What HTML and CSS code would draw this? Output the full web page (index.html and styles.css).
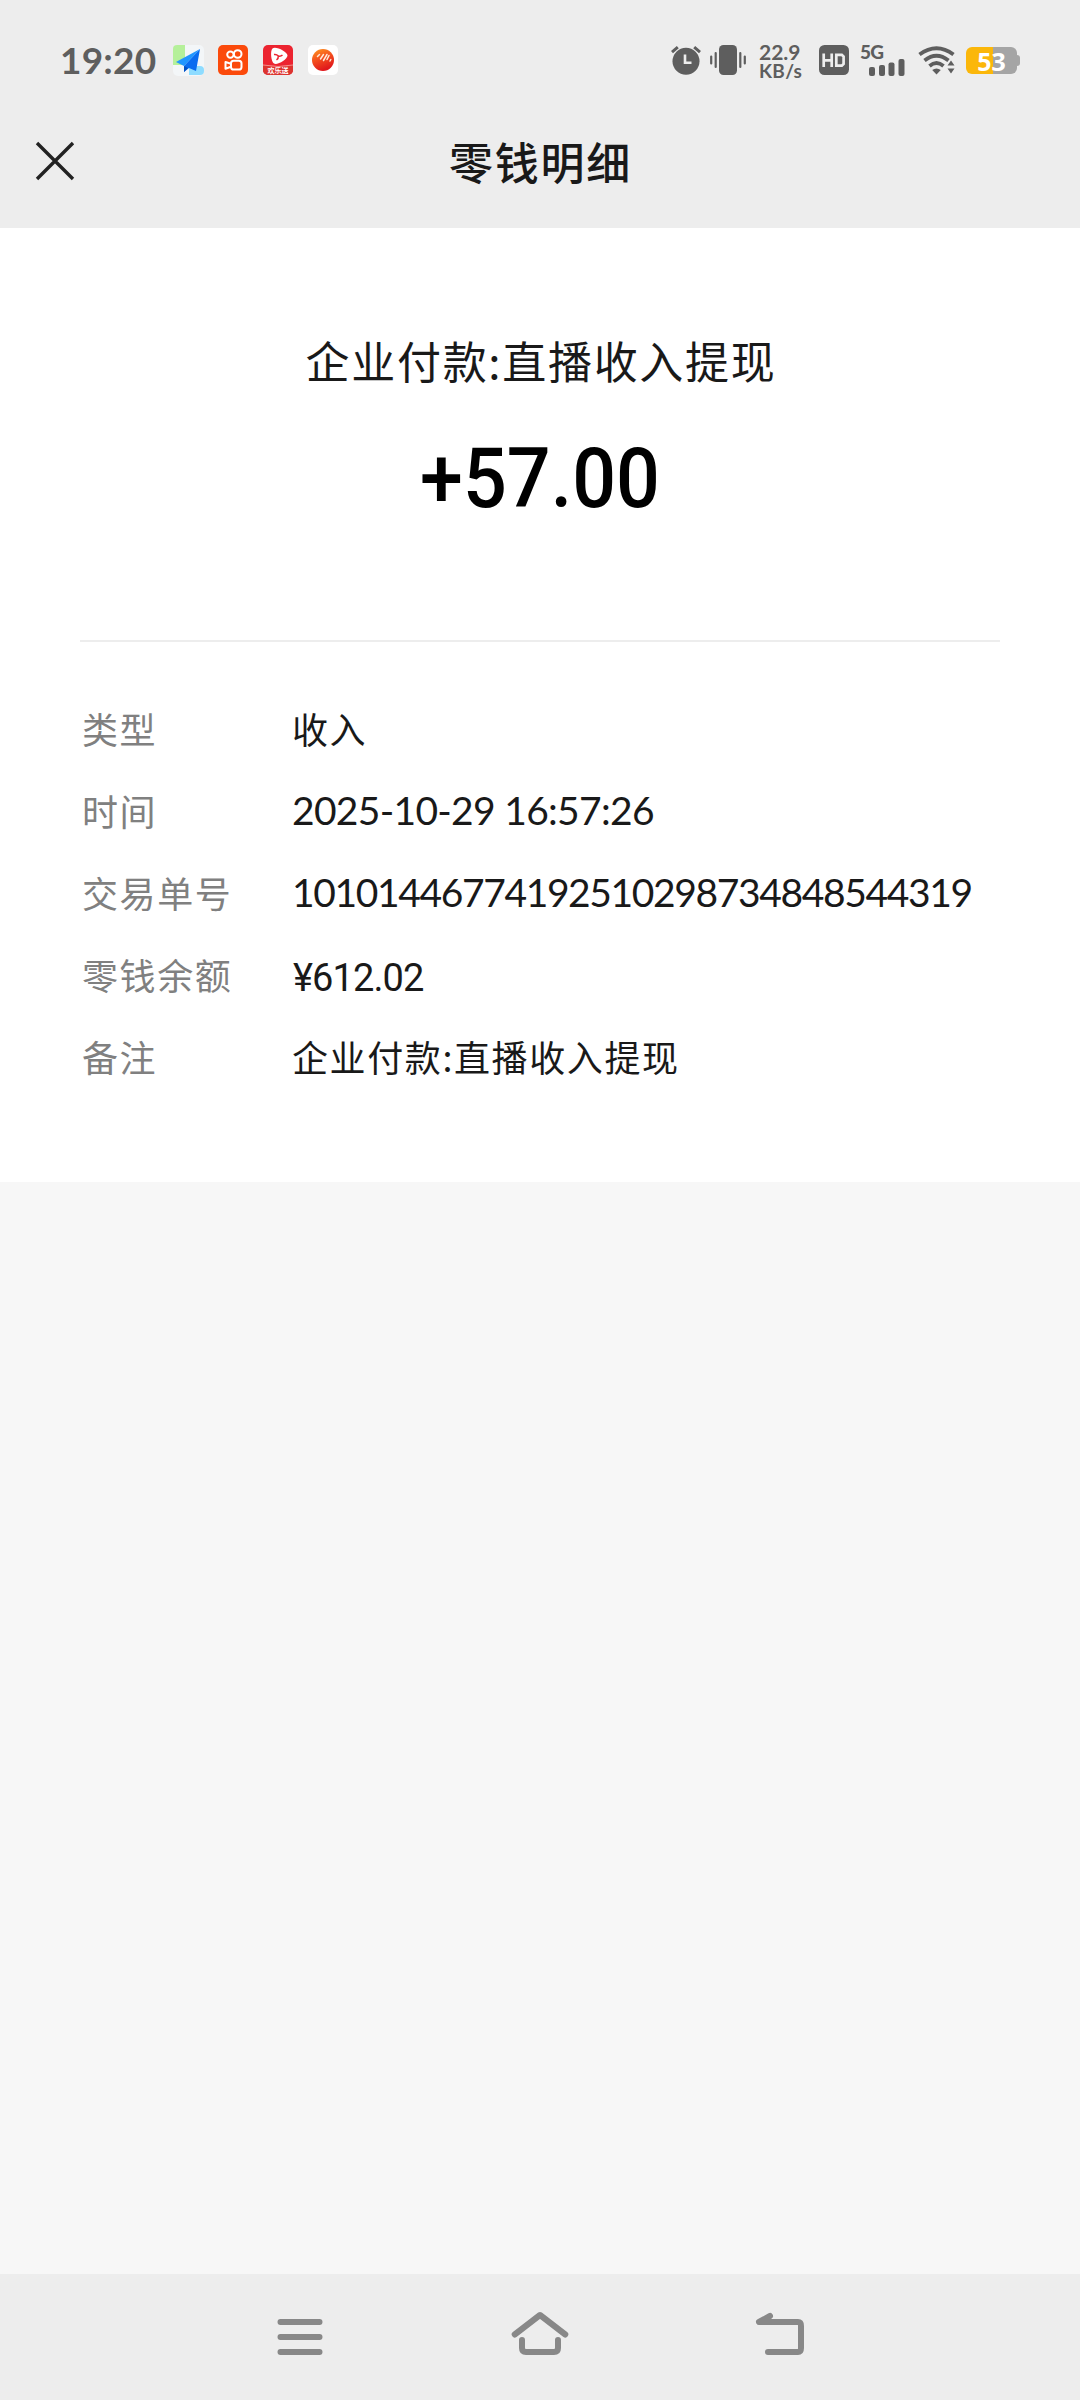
FILE: index.html
```html
<!DOCTYPE html>
<html lang="zh-CN">
<head>
<meta charset="utf-8">
<title>零钱明细</title>
<link rel="stylesheet" href="styles.css">
</head>
<body>
<div class="screen">
  <div class="status">
    <span class="clock">19:20</span>
    <svg class="app app-plane" viewBox="0 0 31 31" width="31" height="31">
      <rect x="0" y="0" width="31" height="31" rx="5" fill="#f3f6f8"/>
      <path d="M4 0h8v20H0V4a4 4 0 0 1 4-4z" fill="#b5f09a"/>
      <path d="M16 21h11a4 4 0 0 1 4 4v1a4 4 0 0 1-4 4H16z" fill="#8edcff"/>
      <path d="M27 4 3 17l8 4z" fill="#2196ff"/>
      <path d="M27 4 11 21v6l5-4 7 3z" fill="#0a6cf0"/>
      <path d="M11 21l4 2-4 4z" fill="#0550c0"/>
    </svg>
    <svg class="app" viewBox="0 0 30 30" width="30" height="30">
      <rect width="30" height="30" rx="5" fill="#fb4a0b"/>
      <g fill="none" stroke="#fff" stroke-width="2">
        <circle cx="12.4" cy="9.600" r="3.200"/><circle cx="19.700" cy="9" r="3.800"/>
        <rect x="13" y="15.700" width="10.500" height="8.800" rx="2.600"/>
        <path d="M13 18.800 7.500 17v6.800l5.500-2" stroke-linejoin="round"/>
      </g>
    </svg>
    <svg class="app" viewBox="0 0 30 30" width="30" height="30">
      <rect width="30" height="30" rx="5" fill="#ec2430"/>
      <path d="M0 20q15 3 30 0v5a5 5 0 0 1-5 5H5a5 5 0 0 1-5-5z" fill="#dc342f"/>
      <path d="M0 20q15 3 30 0" fill="none" stroke="#f7a9a5" stroke-width=".8"/>
      <path d="M9.500 3.500C12 .5 24.500 6.500 24.500 10.500S14 20.500 11 18.500 7 6 9.500 3.500z" fill="#fff"/>
      <path d="M11 9.500q2.500-.5 4.300 1.500 2.200.8 4.200-1M15.300 11q.3 2.500-1.800 4" fill="none" stroke="#ec2430" stroke-width="1.500"/>
      <text class="app-label" x="15" y="28.200" text-anchor="middle">欢乐送</text>
    </svg>
    <svg class="app" viewBox="0 0 30 30" width="30" height="30">
      <defs><linearGradient id="ball" x1="0" y1="0" x2=".4" y2="1"><stop offset="0" stop-color="#ff9a1f"/><stop offset=".5" stop-color="#f4501e"/><stop offset="1" stop-color="#e0181c"/></linearGradient></defs>
      <rect width="30" height="30" rx="5" fill="#fff"/>
      <circle cx="15" cy="15" r="11" fill="url(#ball)"/>
      <path d="M9.500 11.500l2-2M12.500 14l3-4.500M15.500 15.500l3.500-6M19 14.500l2-4M22 16l.8-1.500" stroke="#ffe9d8" stroke-width="1.500" stroke-linecap="round"/>
    </svg>
    <svg class="alarm" viewBox="0 0 30 30" width="30" height="30" fill="#5e5e5e">
      <circle cx="15" cy="16.200" r="13.500"/>
      <path d="M1 7.200 6.800 2.200M29 7.200l-5.800-5" stroke="#5e5e5e" stroke-width="3"/>
      <path d="M14 9.500v8.300h6.500" fill="none" stroke="#ededed" stroke-width="2.600"/>
    </svg>
    <svg class="vibrate" viewBox="0 0 36 30" width="36" height="30" fill="#5e5e5e">
      <rect x="9" width="18" height="30" rx="4.500"/>
      <path d="M5.700 8v14M1.200 11.500v7M30.300 8v14M34.800 11.500v7" stroke="#5e5e5e" stroke-width="2.200" stroke-linecap="round"/>
    </svg>
    <div class="speed"><span class="rate">22.9</span><span class="unit">KB/s</span></div>
    <svg class="hd" viewBox="0 0 30 30" width="30" height="30">
      <rect width="30" height="30" rx="5.500" fill="#5e5e5e"/>
      <path d="M4.700 8.500v13.500M12.700 8.500v13.500M4.700 15.300h8M17.300 9.800h5.500l1.800 1.800v7.300l-1.800 1.800h-5.500z" fill="none" stroke="#ededed" stroke-width="2.700"/>
    </svg>
    <div class="signal">
      <span class="gen">5G</span>
      <svg class="bars" viewBox="0 0 36 17" width="36" height="17" fill="#5e5e5e">
        <rect x="0" y="8" width="6" height="9" rx="2"/><rect x="10" y="6" width="6" height="11" rx="2"/><rect x="19.500" y="3.500" width="6" height="13.500" rx="2"/><rect x="29.500" y="0" width="6" height="17" rx="2"/>
      </svg>
    </div>
    <svg class="wifi" viewBox="0 0 37 30" width="37" height="30">
      <g fill="none" stroke="#5e5e5e" stroke-width="3.800">
        <path d="M1.500 9.500Q18.500-3 35.500 9.500"/><path d="M6.500 15.500Q18.500 6 30.500 15.500"/><path d="M11.500 21Q18.500 15 25.500 21"/>
      </g>
      <path d="M14.200 25q4.300-3 8.600 0l-4.300 4.500zM29.500 20.500l3.500-5 3.500 5zM29.500 23.500h7l-3.500 5z" fill="#5e5e5e"/>
    </svg>
    <div class="battery"><span class="level">53</span></div>
  </div>

  <div class="titlebar">
    <svg class="close" viewBox="0 0 40 40" width="40" height="40"><path d="M2 2l36 36M38 2 2 38" stroke="#222" stroke-width="3.400"/></svg>
    <h1 class="title">零钱明细</h1>
  </div>

  <main class="card">
    <div class="summary">
      <div class="name">企业付款:直播收入提现</div>
      <div class="amount">+57.00</div>
    </div>
    <dl class="details">
      <div class="row"><dt>类型</dt><dd>收入</dd></div>
      <div class="row"><dt>时间</dt><dd class="date">2025-10-29 16:57:26</dd></div>
      <div class="row"><dt>交易单号</dt><dd class="serial">10101446774192510298734848544319</dd></div>
      <div class="row"><dt>零钱余额</dt><dd class="balance">¥612.02</dd></div>
      <div class="row"><dt>备注</dt><dd>企业付款:直播收入提现</dd></div>
    </dl>
  </main>

  <nav class="navbar">
    <svg viewBox="0 0 60 60" width="60" height="60"><path d="M10.500 18h39M10.500 33h39M10.500 48h39"/></svg>
    <svg viewBox="0 0 60 60" width="60" height="60"><path d="M4.700 30.500 30 11l25.300 19.500M12 36v8q0 4 4 4h28q4 0 4-4v-8"/></svg>
    <svg viewBox="0 0 60 60" width="60" height="60"><path d="M20 12 9 18h39q3 0 3 4v22q0 4-3 4H18"/></svg>
  </nav>
</div>
</body>
</html>
```
FILE: styles.css
```css
* { box-sizing: border-box; }
body { margin: 0; }
.screen {
  width: 1080px;
  height: 2400px;
  display: flex;
  flex-direction: column;
  background: #f7f7f7;
  color: #191919;
  font-family: "Noto Sans CJK SC", sans-serif;
}
.status {
  height: 102px;
  padding: 18px 61px 0 60px;
  display: flex;
  align-items: center;
  background: #ededed;
  color: #5e5e5e;
}
.clock {
  width: 113px;
  font: 700 37px/40px Lato, sans-serif;
  letter-spacing: 0.2px;
}
.app { margin-right: 15px; }
.app-plane { margin-right: 14px; }
.app-label { font: 700 7px "Noto Sans CJK SC", sans-serif; fill: #fff; }
.alarm { margin-left: auto; }
.vibrate { margin-left: 9px; }
.speed {
  width: 45px;
  margin-left: 13px;
  display: flex;
  flex-direction: column;
  white-space: nowrap;
}
.rate { font: 700 21px/20px Lato, sans-serif; }
.unit { font: 700 19px/17px Lato, sans-serif; letter-spacing: 0.3px; }
.hd { margin-left: 15px; }
.signal {
  width: 46px;
  height: 32px;
  margin-left: 11px;
  display: flex;
  flex-direction: column;
}
.gen { font: 900 19px/15px Lato, sans-serif; letter-spacing: -0.8px; }
.bars { margin-left: 9px; }
.wifi { margin-left: 12px; }
.battery {
  position: relative;
  width: 51px;
  height: 27px;
  margin: 0 2px 0 11px;
  border-radius: 6px;
  background: linear-gradient(90deg, #fbb70a 27px, #a5a5a5 27px);
  text-align: center;
}
.battery::after {
  content: "";
  position: absolute;
  right: -3px;
  top: 8px;
  width: 3px;
  height: 11px;
  border-radius: 0 3px 3px 0;
  background: #a5a5a5;
}
.level { display: block; font: 700 25px/28px "Open Sans", sans-serif; color: #fff; }
.titlebar {
  height: 126px;
  padding: 0 34px 0 35px;
  display: grid;
  grid-template-columns: 40px 1fr 40px;
  align-items: start;
  background: #ededed;
}
.close { margin-top: 39px; }
.title {
  margin: 26px 0 0;
  font-size: 44px;
  line-height: 66px;
  font-weight: 500;
  letter-spacing: 1.800px;
  text-align: center;
}
.card { height: 954px; padding: 0 80px; background: #fff; }
.summary {
  height: 414px;
  padding-top: 99px;
  border-bottom: 2px solid #ededed;
  text-align: center;
}
.name { padding-left: 2px; font-size: 44px; line-height: 66px; letter-spacing: 1.700px; }
.amount {
  margin-top: 41px;
  font: 500 83px/90px Roboto, sans-serif;
  color: #000;
  transform: scaleX(0.93);
}
.details { margin: 0; padding: 45px 0 0 2px; }
.row {
  height: 82px;
  display: grid;
  grid-template-columns: 210px 1fr;
  align-items: center;
  font-size: 36px;
  line-height: 54px;
  letter-spacing: 1.600px;
}
dt { color: #808080; }
dd { margin: 0; white-space: nowrap; }
.date, .serial { font-family: Lato, sans-serif; font-size: 39px; }
.date { letter-spacing: -0.7px; }
.serial { letter-spacing: -1.380px; }
.balance { padding: 8px 0 0 1px; font-family: Roboto, sans-serif; font-size: 38px; letter-spacing: -0.9px; }
.navbar {
  height: 126px;
  margin-top: auto;
  padding: 30px 270px 0;
  display: flex;
  justify-content: space-between;
  background: #ededed;
}
.navbar svg { fill: none; stroke: #888; stroke-width: 6; stroke-linecap: round; stroke-linejoin: round; }
```
